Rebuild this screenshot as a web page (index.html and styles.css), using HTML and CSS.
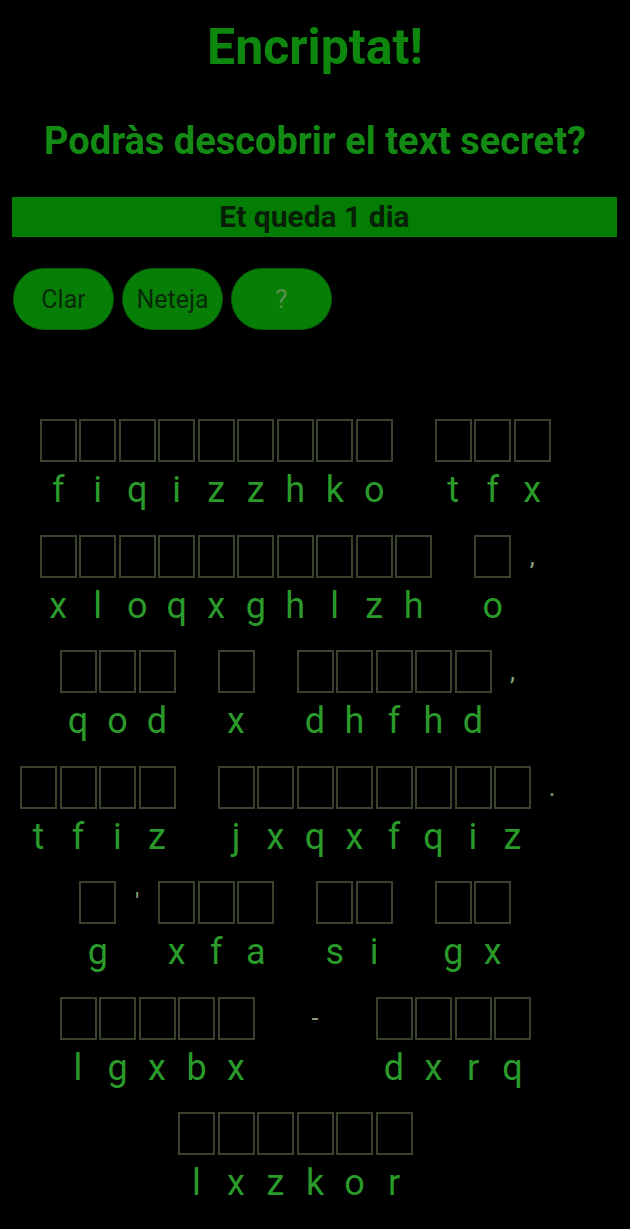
FILE: index.html
```html
<!DOCTYPE html>
<html lang="ca">
<head>
<meta charset="utf-8">
<title>Encriptat!</title>
<link rel="stylesheet" href="styles.css">
</head>
<body>
<h1 class="title">Encriptat!</h1>
<h2 class="subtitle">Podràs descobrir el text secret?</h2>
<div class="bar">Et queda 1 dia</div>
<div class="buttons">
  <button class="btn">Clar</button>
  <button class="btn">Neteja</button>
  <button class="btn btn-help">?</button>
</div>
<div class="puzzle" id="puzzle"></div>
<script src="app.js"></script>
</body>
</html>
```
FILE: styles.css
```css
html, body {
  margin: 0;
  padding: 0;
  background: #000;
}
body {
  font-family: Roboto, "Noto Sans", sans-serif;
  width: 630px;
}
.title {
  margin: 18px 0 0;
  font-size: 50px;
  line-height: 58px;
  font-weight: 700;
  color: #0e870e;
  text-align: center;
}
.subtitle {
  margin: 43px 0 0;
  font-size: 38px;
  line-height: 44px;
  font-weight: 700;
  color: #138a13;
  text-align: center;
}
.bar {
  margin: 34px 13px 0 12px;
  height: 40px;
  background: #047d04;
  color: #061f06;
  font-size: 30px;
  line-height: 40px;
  font-weight: 700;
  text-align: center;
}
.buttons {
  display: flex;
  gap: 8px;
  margin-top: 31px;
  padding-left: 13px;
}
.btn {
  width: 101px;
  height: 62px;
  border-radius: 31px;
  border: 1.5px solid #0a5c0a;
  background: #077f07;
  color: #082a08;
  font-family: Roboto, sans-serif;
  font-size: 25px;
  padding: 0;
}
.btn-help {
  color: #5b8f4f;
}
.puzzle {
  display: flex;
  flex-wrap: wrap;
  justify-content: center;
  row-gap: 22.5px;
  margin-top: 89px;
}
.word {
  display: flex;
  flex-wrap: nowrap;
}
.cell {
  width: 39.5px;
  display: flex;
  flex-direction: column;
  align-items: center;
}
.box {
  width: 37px;
  height: 43px;
  box-sizing: border-box;
  border: 2px solid #39422c;
}
.punct {
  width: 37px;
  height: 43px;
  font-size: 25px;
  line-height: 43px;
  text-align: center;
  color: #8fa080;
}
.gap {
  height: 43px;
}
.letter {
  margin-top: 6px;
  height: 44px;
  font-size: 36px;
  line-height: 44px;
  color: #2a9a2a;
  text-align: center;
}
```
FILE: app.js
```js
(function () {
  var text = "fiqizzhko tfx xloqxghlzh o, qod x dhfhd, tfiz jxqxfqiz. g'xfa si gx lgxbx - dxrq lxzkor";
  var puzzle = document.getElementById('puzzle');
  text.split(' ').forEach(function (w) {
    var word = document.createElement('div');
    word.className = 'word';
    (w + ' ').split('').forEach(function (ch) {
      var cell = document.createElement('div');
      cell.className = 'cell';
      var top = document.createElement('div');
      var bottom = document.createElement('div');
      bottom.className = 'letter';
      if (ch === ' ') {
        top.className = 'gap';
      } else if (/[a-z]/.test(ch)) {
        top.className = 'box';
        bottom.textContent = ch;
      } else {
        top.className = 'punct';
        top.textContent = ch;
      }
      cell.appendChild(top);
      cell.appendChild(bottom);
      word.appendChild(cell);
    });
    puzzle.appendChild(word);
  });
})();
```
